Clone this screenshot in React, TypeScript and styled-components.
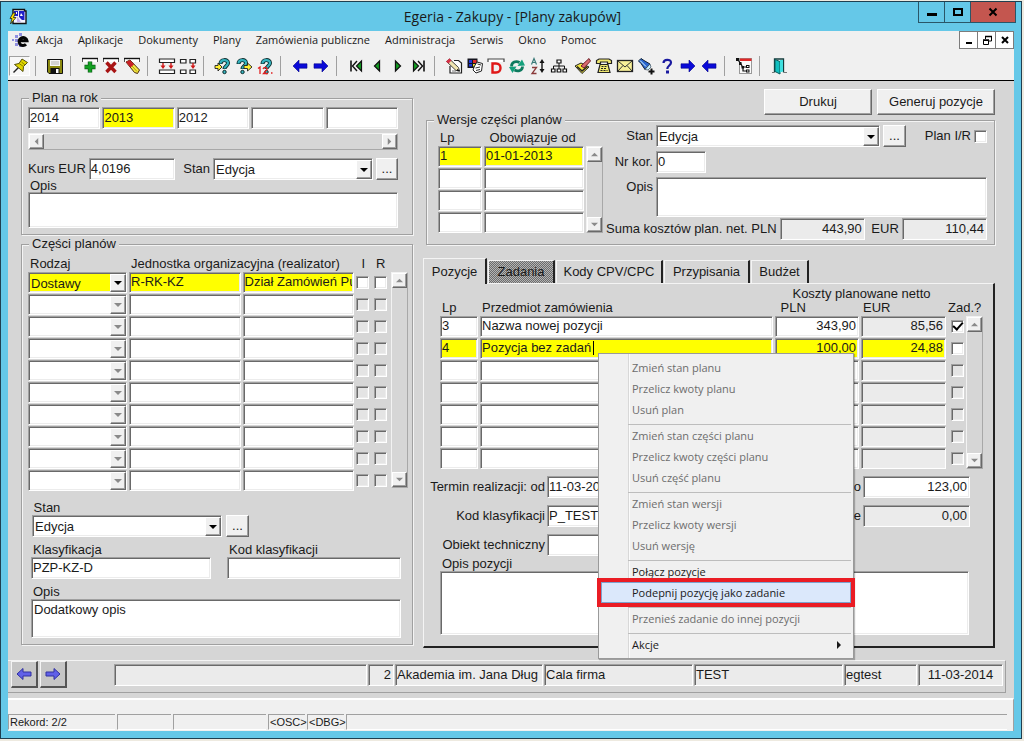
import React from 'react';
import styled, { createGlobalStyle, css } from 'styled-components';

const GlobalStyle = createGlobalStyle`
  * { box-sizing: border-box; }
  body {
    margin: 0;
    background: #eeeae0;
    color: #1a1a1a;
    font-family: "Liberation Sans", Arial, sans-serif;
    font-size: 13px;
    line-height: 14px;
  }
  button, input, select, textarea { font: inherit; color: inherit; margin: 0; border-radius: 0; outline: none; }
`;

const face = '#d6d6d6';
const uiFont = '"Open Sans", "Noto Sans", sans-serif';

const sunken = css`
  border: 1px solid;
  border-color: #a0a0a0 #fff #fff #a0a0a0;
  box-shadow: inset 1px 1px 0 #696969, inset -1px -1px 0 #ececec;
`;
const raised = css`
  border: 1px solid;
  border-color: #fff #696969 #696969 #fff;
  box-shadow: inset -1px -1px 0 #a0a0a0;
`;

/* ---------- window ---------- */

const Desktop = styled.div`
  min-height: 100vh;
  padding: 1px 2px 2px 0;
  display: flex;
`;
const Frame = styled.div`
  flex: 1;
  min-width: 0;
  display: flex;
  flex-direction: column;
  border: 1px solid #1f3f50;
  background: #65c8e8;
  padding-bottom: 7px;
`;
const TitleBar = styled.header`
  display: grid;
  grid-template-columns: 1fr auto 1fr;
  height: 29px;
  padding: 0 5px 0 8px;
  align-items: center;
`;
const Title = styled.h1`
  margin: 0;
  font: 400 14px/20px ${uiFont};
`;
const CaptionButtons = styled.div`
  display: flex;
  justify-self: end;
  align-self: start;
`;
const CaptionButton = styled.button<{ $close?: boolean }>`
  width: ${p => (p.$close ? 46 : 27)}px;
  height: 21px;
  margin-left: -1px;
  padding: 0;
  display: grid;
  place-items: center;
  border: 1px solid #2a5668;
  border-top: 0;
  background: ${p => (p.$close ? '#c4564f' : '#65c8e8')};
`;
const Client = styled.div`
  flex: 1;
  margin: 0 7px;
  display: flex;
  flex-direction: column;
  background: ${face};
`;
const MenuBar = styled.nav`
  display: flex;
  align-items: center;
  height: 20px;
  padding: 0 0 2px 3px;
  background: #f0f0f0;
`;
const MenuList = styled.ul`
  flex: 1;
  display: flex;
  gap: 15px;
  margin: 0 0 0 7px;
  padding: 0;
  list-style: none;
  font: 400 11px/16px ${uiFont};
`;
const MenuLink = styled.a`
  color: inherit;
  text-decoration: none;
  white-space: nowrap;
`;
const ChildButton = styled.button`
  width: 19px;
  height: 18px;
  margin-left: -1px;
  padding: 0;
  display: grid;
  place-items: center;
  background: #fff;
  border: 1px solid #7c7c7c;
`;

/* ---------- toolbar ---------- */

const ToolBar = styled.div`
  display: flex;
  align-items: center;
  height: 30px;
  padding-left: 1px;
  background: #f0f0f0;
  border-bottom: 1px solid #000;
`;
const ToolGroup = styled.div`
  display: flex;
  & + & {
    margin-left: 5px;
    padding-left: 8px;
    border-left: 1px solid #a0a0a0;
  }
`;
const ToolButton = styled.button<{ $pressed?: boolean }>`
  width: 21px;
  height: 20px;
  padding: 0;
  display: grid;
  place-items: center;
  border: 1px solid;
  border-color: ${p => (p.$pressed ? '#a0a0a0 #fff #fff #a0a0a0' : 'transparent')};
  background: ${p => (p.$pressed ? '#f7f7f7' : 'transparent')};
  svg { margin: -1px; }
`;
const ToolSpace = styled.span`
  width: 3px;
`;

/* ---------- form parts ---------- */

const Workspace = styled.main`
  flex: 1;
  display: grid;
  grid-template-columns: minmax(0, 392fr) minmax(0, 572fr);
  gap: 10px;
  align-items: start;
  padding: 8px 19px 0 13px;
`;
const LeftColumn = styled.div`
  display: flex;
  flex-direction: column;
  gap: 4px;
  padding-top: 4px;
`;
const Group = styled.fieldset<{ $pad: string }>`
  min-width: 0;
  margin: 0;
  padding: ${p => p.$pad};
  border: 1px solid #a0a0a0;
  box-shadow: 1px 1px 0 #f4f4f4, inset 1px 1px 0 #f4f4f4;
`;
const Legend = styled.legend`
  margin-left: 1px;
  padding: 0 3px;
  line-height: 10px;
  background: ${face};
`;
const Row = styled.div<{ $top?: number; $gap?: number }>`
  display: flex;
  align-items: center;
  gap: ${p => p.$gap ?? 3}px;
  margin-top: ${p => p.$top ?? 0}px;
`;
const Label = styled.label<{ $width?: number; $top?: number; $block?: boolean }>`
  display: ${p => (p.$block ? 'block' : 'inline-block')};
  flex: none;
  white-space: nowrap;
  text-align: ${p => (p.$width ? 'right' : 'left')};
  ${p => p.$width && `width: ${p.$width}px;`}
  margin-top: ${p => p.$top ?? 0}px;
  ${p => p.$block && 'padding-left: 2px;'}
`;
type FieldProps = { $w?: number; $on?: boolean; $locked?: boolean; $right?: boolean };
const Field = styled.input<FieldProps>`
  ${sunken}
  display: block;
  min-width: 0;
  ${p => (p.$w ? `flex: none; width: ${p.$w}px;` : 'flex: 1; width: 100%;')}
  height: 22px;
  padding: 0 ${p => (p.$right ? 2 : 1)}px 2px 1px;
  background: ${p => (p.$on ? '#ff0' : p.$locked ? '#ebebeb' : '#fff')};
  text-align: ${p => (p.$right ? 'right' : 'left')};
`;
const CellField = styled(Field)`
  height: 21px;
`;
const Area = styled.textarea<{ $h: number; $top?: number }>`
  ${sunken}
  display: block;
  flex: 1;
  width: 100%;
  min-width: 0;
  height: ${p => p.$h}px;
  margin-top: ${p => p.$top ?? 0}px;
  padding: 3px 2px;
  resize: none;
  background: #fff;
`;
const PushButton = styled.button<{ $w: number; $h?: number }>`
  ${raised}
  flex: none;
  width: ${p => p.$w}px;
  height: ${p => p.$h ?? 22}px;
  padding: 0;
  background: #f0f0f0;
`;
const Check = styled.input.attrs({ type: 'checkbox' })<{ $dim?: boolean }>`
  ${sunken}
  appearance: none;
  display: grid;
  place-items: center;
  flex: none;
  width: 13px;
  height: 13px;
  background: ${p => (p.$dim ? '#e4e4e4' : '#fff')};
  &:checked::after {
    content: '';
    width: 8px;
    height: 4px;
    margin-top: -3px;
    border: solid #000;
    border-width: 0 0 2px 2px;
    transform: rotate(-48deg);
  }
`;

const SelectBox = styled.span<{ $w?: number }>`
  position: relative;
  display: block;
  ${p => (p.$w ? `flex: none; width: ${p.$w}px;` : 'flex: 1; min-width: 0;')}
`;
const NativeSelect = styled.select<{ $on?: boolean; $h: number }>`
  ${sunken}
  appearance: none;
  display: block;
  width: 100%;
  height: ${p => p.$h}px;
  padding: 2px 18px 0 2px;
  background: ${p => (p.$on ? '#ff0' : '#fff')};
  opacity: 1;
`;
const SelectArrow = styled.span<{ $dim?: boolean }>`
  ${raised}
  position: absolute;
  top: 2px;
  right: 1px;
  bottom: 1px;
  width: 16px;
  display: grid;
  place-items: center;
  background: #f0f0f0;
  pointer-events: none;
  color: ${p => (p.$dim ? '#8a8a8a' : '#000')};
`;

function Arrow({ dir, size = 8 }: { dir: 'up' | 'down' | 'left' | 'right'; size?: number }) {
  const d = {
    up: 'M0 6L4 2L8 6Z',
    down: 'M0 2L4 6L8 2Z',
    left: 'M6 0L2 4L6 8Z',
    right: 'M2 0L6 4L2 8Z',
  }[dir];
  return (
    <svg width={size} height={size} viewBox="0 0 8 8" aria-hidden="true">
      <path d={d} fill="currentColor" />
    </svg>
  );
}

function Select({ w, on, dim, value, label, id, h = 22 }: {
  w?: number; on?: boolean; dim?: boolean; value?: string; label?: string; id?: string; h?: number;
}) {
  return (
    <SelectBox $w={w}>
      <NativeSelect id={id} aria-label={label} $on={on} $h={h} defaultValue={value ?? ''} disabled={dim}>
        <option>{value ?? ''}</option>
      </NativeSelect>
      <SelectArrow $dim={dim}><Arrow dir="down" /></SelectArrow>
    </SelectBox>
  );
}

const Track = styled.div<{ $horizontal?: boolean; $top?: number; $length?: number }>`
  display: flex;
  flex: none;
  flex-direction: ${p => (p.$horizontal ? 'row' : 'column')};
  justify-content: space-between;
  margin-top: ${p => p.$top ?? 0}px;
  ${p => (p.$horizontal ? 'height: 17px;' : `width: 17px; height: ${p.$length}px;`)}
  border: 1px solid;
  border-color: #f2f2f2 #a8a8a8 #a8a8a8 #f2f2f2;
  background: ${face};
`;
const TrackButton = styled.button`
  ${raised}
  width: 15px;
  height: 15px;
  padding: 0;
  display: grid;
  place-items: center;
  background: #f0f0f0;
  color: #8a8a8a;
`;
function ScrollBar({ horizontal, top, length }: { horizontal?: boolean; top?: number; length?: number }) {
  return (
    <Track $horizontal={horizontal} $top={top} $length={length}>
      <TrackButton aria-label="Wstecz"><Arrow dir={horizontal ? 'left' : 'up'} size={7} /></TrackButton>
      <TrackButton aria-label="Dalej"><Arrow dir={horizontal ? 'right' : 'down'} size={7} /></TrackButton>
    </Track>
  );
}

const Records = styled.table`
  flex: 1;
  min-width: 0;
  width: 100%;
  table-layout: fixed;
  border-collapse: collapse;
  th {
    height: 15px;
    padding: 0 0 1px 2px;
    font-weight: 400;
    text-align: left;
    white-space: nowrap;
    line-height: 14px;
  }
  td { height: 22px; padding: 0 2px 1px 0; position: relative; }
`;
const CenterHead = styled.th`
  && { text-align: center; padding: 0; }
`;
const Grid = styled.div<{ $pad: string }>`
  display: flex;
  align-items: flex-start;
  padding: ${p => p.$pad};
`;
const Caret = styled.span`
  position: absolute;
  left: 113px;
  top: 3px;
  width: 1px;
  height: 14px;
  background: #000;
`;

/* ---------- tabs ---------- */

const Tabs = styled.div`
  display: flex;
  align-items: flex-end;
  gap: 1px;
  height: 25px;
  margin-top: 13px;
`;
const Tab = styled.button<{ $active?: boolean; $focus?: boolean; $w: number }>`
  width: ${p => p.$w}px;
  height: ${p => (p.$active ? 26 : 23)}px;
  margin-bottom: ${p => (p.$active ? -1 : 0)}px;
  padding: 0;
  position: relative;
  z-index: ${p => (p.$active ? 1 : 0)};
  border: solid;
  border-width: 1px 2px 0 1px;
  border-color: #f4f4f4 #222 #f4f4f4 #f4f4f4;
  background: ${p => (p.$focus ? 'repeating-conic-gradient(#6c6c6c 0 25%, #b4b4b4 0 50%) 0 0 / 2px 2px' : face)};
`;
const TabPanel = styled.section`
  position: relative;
  padding: 2px 10px 11px 0;
  border: solid;
  border-width: 1px 2px 2px 1px;
  border-color: #f4f4f4 #222 #222 #f4f4f4;
`;
const DetailGrid = styled.div`
  display: grid;
  grid-template-columns: 121px 84px minmax(0, 1fr) 107px;
  column-gap: 2px;
  row-gap: 7px;
  align-items: center;
  padding: 6px 13px 0 0;
  > label { text-align: right; }
`;
const Versions = styled.div`
  display: grid;
  grid-template-columns: 165px minmax(0, 1fr);
  gap: 3px;
  padding-left: 5px;
`;
const Push = styled.span`
  flex: 1;
`;

/* ---------- context menu ---------- */

const ContextMenu = styled.ul`
  position: absolute;
  left: 174px;
  top: 69px;
  z-index: 2;
  width: 256px;
  margin: 0;
  padding: 3px 2px;
  list-style: none;
  background: linear-gradient(90deg, transparent 29px, #d8d8d8 29px 30px, #fbfbfb 30px 31px, transparent 31px) #f0f0f0;
  border: 1px solid #9a9a9a;
  box-shadow: 1px 1px 1px rgba(0, 0, 0, 0.25);
  font: 400 11px/20px ${uiFont};
`;
const ContextItem = styled.li<{ $divided?: boolean }>`
  ${p => p.$divided && css`
    padding-top: 4px;
    &::before {
      content: '';
      display: block;
      height: 1px;
      margin-left: 27px;
      background: #bdbdbd;
    }
  `}
`;
const ContextButton = styled.button<{ $marked?: boolean }>`
  position: relative;
  display: flex;
  align-items: center;
  justify-content: space-between;
  width: 100%;
  height: 21px;
  padding: 0 8px 0 31px;
  border: 0;
  background: transparent;
  text-align: left;
  &:disabled { color: #6d6d6d; }
  ${p => p.$marked && css`
    z-index: 1;
    background: #dbe8fb;
    border: 1px solid #7da2ce;
    padding-left: 30px;
    outline: 4px solid #ea1c24;
  `}
`;

/* ---------- bottom bars ---------- */

const NavBar = styled.div`
  display: flex;
  align-items: flex-start;
  height: 33px;
  margin: 12px 8px 0 0;
  padding: 0 2px 0 3px;
  border: solid;
  border-width: 1px 1px 1px 0;
  border-color: #f4f4f4 #a0a0a0 #a0a0a0;
`;
const NavButton = styled.button`
  width: 27px;
  height: 27px;
  margin-right: 2px;
  padding: 0;
  display: grid;
  place-items: center;
  background: #c6c6c6;
  border: solid;
  border-width: 1px 2px 2px 1px;
  border-color: #f4f4f4 #555 #555 #f4f4f4;
`;
const NavFields = styled.div`
  flex: 1;
  display: grid;
  grid-template-columns: 253fr 26fr 148fr 149fr 149fr 73fr 85fr;
  gap: 1px;
  margin: 3px 0 0 45px;
`;
const NavField = styled(Field)<{ $center?: boolean }>`
  ${p => p.$center && 'text-align: center;'}
`;
const StatusBar = styled.footer`
  margin-top: 5px;
  padding: 14px 6px 0 0;
  height: 33px;
  background: #f0f0f0;
  border-top: 2px solid #fff;
  border-right: 1px solid #a0a0a0;
  font-size: 11px;
  line-height: 14px;
`;
const StatusCells = styled.div`
  display: grid;
  grid-template-columns: 107px 54px 93px 37px 37px 1fr;
  gap: 2px;
`;
const StatusCell = styled.span`
  height: 16px;
  padding-left: 1px;
  border: solid;
  border-width: 1px 0 1px 1px;
  border-color: #a0a0a0 #fff #fff #a0a0a0;
  white-space: nowrap;
`;

/* ---------- icons ---------- */

const Glyph = ({ children, size = 18 }: { children: React.ReactNode; size?: number }) => (
  <svg width={size} height={size} viewBox="0 0 18 18" fill="none" aria-hidden="true">{children}</svg>
);

const AppIcon = () => (
  <Glyph>
    <path d="M4 1.5H15.5V3H17V15.5H4Z" fill="#f4f4ff" stroke="#111" strokeWidth="1.4" />
    <path d="M5 3H9V8H5ZM10 3H15.5V12H13L10 9Z" fill="#2020c8" />
    <path d="M12 5L14 8H11ZM7 4H8V6H7Z" fill="#fff" />
    <path d="M8 8L12 14H8Z" fill="#c8b0f0" />
    <path d="M4 5L1 10.5H3L1.5 16L7 9.5H4.5L6.5 5Z" fill="#ffe000" stroke="#222" strokeWidth=".8" />
  </Glyph>
);
const EIcon = () => (
  <svg width="18" height="16" viewBox="0 0 18 16" aria-hidden="true">
    <g fill="#8f8fe0">
      <rect x="1" y="7" width="2" height="2" /><rect x="4" y="3" width="3" height="3" />
      <rect x="4" y="7" width="3" height="3" /><rect x="4" y="11" width="3" height="3" />
      <rect x="8" y="1" width="3" height="3" /><rect x="8" y="12" width="3" height="3" />
    </g>
    <path d="M9.5 8.8H16A4 4 0 1 0 15 12.2" fill="none" stroke="#050505" strokeWidth="3" />
  </svg>
);
const topBar = <path d="M1.5 5V1.5H16.5V5" stroke="#555" fill="#fff" strokeWidth="1" />;
const topEdge = <path d="M1 1.5H17" stroke="#111" strokeWidth="1.4" />;
const question = (
  <>
    <path d="M6.5 7C6.5 2 14 2 14 6C14 9 10.5 9 10.5 12" stroke="#0a2a2a" strokeWidth="4" />
    <path d="M6.5 6.5C6.5 2 14 2 14 6C14 9 10.5 9 10.5 11.5" stroke="#35b4c0" strokeWidth="2.2" />
    <circle cx="10.5" cy="15" r="1.7" fill="#35b4c0" stroke="#0a2a2a" />
  </>
);

const icons: Record<string, React.ReactNode> = {
  pin: (
    <>
      <path d="M2.5 15.5L7.5 10.5" stroke="#222" strokeWidth="1.4" />
      <path d="M3.5 7.5L8 6.5L11 2L16.5 5.5L12.5 9.5L12 14.5Z" fill="#e2d800" stroke="#55500a" />
      <path d="M8 6.5L12.5 9.5M10.5 5L14 8" stroke="#8a8200" />
    </>
  ),
  save: (
    <>
      <path d="M1.5 2.5H16.5V16.5H3L1.5 15Z" fill="#8c8a10" stroke="#111" />
      <rect x="4" y="3" width="10" height="6" fill="#f6f6f6" />
      <path d="M5 5H13M5 7H13" stroke="#b0b0b0" />
      <rect x="4.5" y="11" width="9" height="5.5" fill="#111" />
      <rect x="10" y="12" width="2.5" height="4" fill="#fff" />
    </>
  ),
  add: <>{topBar}{topEdge}<path d="M9 4.5V15.5M3.5 10H14.5" stroke="#0a5a14" strokeWidth="4.4" /><path d="M9 5V15M4 10H14" stroke="#12a022" strokeWidth="3" /></>,
  remove: <>{topBar}{topEdge}<path d="M4.5 5.5L13.5 15M13.5 5.5L4.5 15" stroke="#a81414" strokeWidth="3.4" /></>,
  clear: (
    <>
      {topBar}{topEdge}
      <path d="M3 5L7 3L16.5 13L14.5 16.5L11.5 15.5Z" fill="#f4e840" stroke="#4a2a10" />
      <path d="M3 5L7 3L11 7.5L7.5 10.5Z" fill="#c82028" />
      <path d="M9 9L14 14.5" stroke="#a89a10" />
    </>
  ),
  insert: (
    <>
      <path d="M1.5 5.5V2H16.5V5.5ZM1.5 16.5V13H16.5V16.5Z" fill="#fff" stroke="#222" strokeWidth="1.2" />
      <path d="M5 6V9M13 6V9" stroke="#d01818" strokeWidth="1.4" />
      <path d="M2.5 8.5H7.5L5 12ZM10.5 8.5H15.5L13 12Z" fill="#d01818" />
    </>
  ),
  copy: (
    <>
      <path d="M1.5 2.5H7V6H1.5ZM11 2.5H16.5V6H11ZM1.5 13H7V16.5H1.5ZM11 13H16.5V16.5H11Z" fill="#fff" stroke="#222" strokeWidth="1.2" />
      <path d="M14 6V9" stroke="#d01818" strokeWidth="1.4" /><path d="M11.5 8.5H16.5L14 12Z" fill="#d01818" />
    </>
  ),
  askIn: <>{question}<path d="M1 8.5H4V6L8 10L4 14V11.5H1Z" fill="#fff030" stroke="#222" strokeWidth=".9" /></>,
  askOut: <><g transform="translate(-3 0)">{question}</g><path d="M9 8.5H12.5V6L17 10L12.5 14V11.5H9Z" fill="#fff030" stroke="#222" strokeWidth=".9" /></>,
  askCount: <>{question}<path d="M2 11.5L4 10V17M7 12C8 9.5 11.5 10 11 12.5L7.5 16.5H12M15 16H16.5" stroke="#e02020" strokeWidth="1.3" /></>,
  left: <path d="M2 9L8 3V6.8H16V11.2H8V15Z" fill="#0a0ad8" stroke="#05058a" strokeWidth=".6" />,
  right: <path d="M16 9L10 3V6.8H2V11.2H10V15Z" fill="#0a0ad8" stroke="#05058a" strokeWidth=".6" />,
  first: <><path d="M4 3.5V14.5" stroke="#111" strokeWidth="1.6" /><path d="M10 4L5.5 9L10 14" stroke="#111" strokeWidth="1.4" /><path d="M14.5 4V14L9.5 9Z" fill="#12a022" stroke="#111" strokeWidth="1.2" /></>,
  prev: <path d="M11.5 4V14L6.5 9Z" fill="#12a022" stroke="#111" strokeWidth="1.3" />,
  next: <path d="M6.5 4V14L11.5 9Z" fill="#12a022" stroke="#111" strokeWidth="1.3" />,
  last: <><path d="M14 3.5V14.5" stroke="#111" strokeWidth="1.6" /><path d="M8 4L12.5 9L8 14" stroke="#111" strokeWidth="1.4" /><path d="M3.5 4V14L8.5 9Z" fill="#12a022" stroke="#111" strokeWidth="1.2" /></>,
  edit: (
    <>
      <path d="M5 9V16H16.5V6L13.5 3.5H9" fill="#fff" stroke="#222" strokeWidth="1.2" />
      <path d="M7 14H11" stroke="#777" />
      <path d="M1.5 4.5L4.5 2L13.5 10.5L14.5 14L11 13.5Z" fill="#f2e6b0" stroke="#333" strokeWidth=".9" />
      <path d="M1 4.5L4.5 1.5L6.5 3.5L3.5 6.5Z" fill="#d83048" />
      <path d="M12.5 12.5L14.5 14L12 13.5Z" fill="#111" stroke="#111" />
    </>
  ),
  palette: (
    <>
      <rect x="1.5" y="1.5" width="10" height="9.5" fill="#14141e" />
      <path d="M3 3H6V6H3Z" fill="#2038d8" /><path d="M7 3H10.5V6H7Z" fill="#e02828" /><path d="M3 7H6V9.5H3Z" fill="#2038d8" /><path d="M7 7H10V9.5H7Z" fill="#e8e040" />
      <path d="M11 5L16.5 6.5L15.5 14L10 16L7 13L8.5 9Z" fill="#fff" stroke="#222" />
      <path d="M9.5 11L14 10M10 13.5L14 12.5M11.5 7L15 8" stroke="#333" />
    </>
  ),
  dictionary: <><path d="M1 5V2H17V5" fill="#fff" stroke="#444" strokeWidth="1.2" /><path d="M5.5 6.5H9C15 6.5 15 15.5 9 15.5H5.5Z" stroke="#e01818" strokeWidth="2.4" /></>,
  refresh: (
    <>
      <path d="M3.5 9.5C3.5 5 8 3.5 11.5 5.5" stroke="#0d7a5e" strokeWidth="2.8" /><path d="M9.5 9L17 8.5L14 2.5Z" fill="#14a07c" />
      <path d="M14.5 9.5C14.5 13.5 10 15 6.5 13" stroke="#0d7a5e" strokeWidth="2.8" /><path d="M8.5 9.5L1 10L4.5 16Z" fill="#14a07c" />
    </>
  ),
  sort: (
    <>
      <path d="M2.5 7.5L5 1.5L7.5 7.5M3.3 5.5H6.7" stroke="#3a7a78" strokeWidth="1.2" />
      <path d="M3 10.5H7.5L3 16.5H7.5" stroke="#8a3a3a" strokeWidth="1.3" />
      <path d="M13 4V14" stroke="#111" strokeWidth="1.4" /><path d="M10.5 6L13 2L15.5 6ZM10.5 12L13 16L15.5 12Z" fill="#111" />
    </>
  ),
  tree: (
    <>
      <path d="M9 6V9M3.5 12V9H14.5V12M9 9V12" stroke="#111" />
      <path d="M7 3H11V6H7ZM1.5 12H5V15H1.5ZM7.2 12H10.8V15H7.2ZM13 12H16.5V15H13Z" fill="#fff" stroke="#111" strokeWidth="1.2" />
    </>
  ),
  stamp: (
    <>
      <path d="M1 9L7 6L15 10L8 16.5Z" fill="#f4e640" stroke="#222" />
      <path d="M3 9.5L8 14L13.5 9.5" stroke="#222" strokeWidth="1.6" />
      <path d="M7 9L15 1.5L16.5 4L10 11Z" fill="#d86a70" stroke="#702028" />
    </>
  ),
  phone: (
    <>
      <path d="M1.5 6.5V3.5L4 2H14L16.5 3.5V6.5H12.5V5H5.5V6.5Z" fill="#f0e870" stroke="#222" strokeWidth="1.2" />
      <path d="M5 7.5H13L15 15.5H3Z" fill="#f0e870" stroke="#222" strokeWidth="1.2" />
      <path d="M6.5 9.5H11.5M6 11.5H12M5.5 13.5H12.5" stroke="#222" strokeDasharray="2 1" />
    </>
  ),
  mail: (
    <>
      <rect x="1.5" y="3.5" width="15" height="11" fill="#f8f098" stroke="#222" strokeWidth="1.3" />
      <path d="M2 4L9 10L16 4M2 14L7 8.5M16 14L11 8.5" stroke="#333" />
    </>
  ),
  torch: (
    <>
      <path d="M1.5 4L4 1.5L7 3.5L13 7L8 12.5L4 6.5Z" fill="#2a66d0" stroke="#123" />
      <path d="M13 7L8 12.5L11 13L14 10Z" fill="#c8f0ff" stroke="#345" strokeWidth=".7" />
      <path d="M3 3.5L9 9.5" stroke="#dff" />
      <path d="M14.5 11.5V17.5M11.5 14.5H17.5" stroke="#111" strokeWidth="2" />
    </>
  ),
  help: <><path d="M5.5 6C5.5 1.8 13 1.8 13 5.5C13 8.5 9.3 8.5 9.3 12" stroke="#1a1aa0" strokeWidth="2.2" /><rect x="8" y="13.5" width="3" height="3" fill="#1a1aa0" /></>,
  outline: (
    <>
      <rect x="4.5" y="1.5" width="12" height="15" fill="#fafafa" stroke="#999" />
      <rect x="5" y="1.5" width="11.5" height="2.5" fill="#e02828" />
      <path d="M3 3L6 7L8 11V14H12M8 10H12" stroke="#111" strokeWidth="1.2" />
      <path d="M1 1H4V4H1ZM4 5H6.5V8H4ZM6.5 9H9V11.5H6.5ZM11 8H14.5V11H11ZM11 12.5H14.5V15.5H11Z" fill="#111" />
      <path d="M12 9H13.5V10H12ZM12 13.5H13.5V14.5H12Z" fill="#fff" />
    </>
  ),
  exit: (
    <>
      <path d="M4.5 15.5V2H13.5V15.5" fill="#fff" stroke="#123c3c" strokeWidth="1.3" />
      <path d="M5 2.5L10 4.5V17L5 14.5Z" fill="#10c0c0" stroke="#0a5a5a" />
      <path d="M10 3H13V14.5L10 15.5Z" fill="#40e0e0" />
      <path d="M2 15.5H4M14 15.5H17" stroke="#777" />
    </>
  ),
};

const toolGroups: [string, string][][] = [
  [['pin', 'Przypnij']],
  [['save', 'Zapisz']],
  [['add', 'Dodaj'], ['remove', 'Usuń'], ['clear', 'Wyczyść']],
  [['insert', 'Wstaw'], ['copy', 'Kopiuj']],
  [['askIn', 'Wprowadź zapytanie'], ['askOut', 'Wykonaj zapytanie'], ['askCount', 'Policz rekordy']],
  [['left', 'Poprzedni blok'], ['right', 'Następny blok']],
  [['first', 'Pierwszy'], ['prev', 'Poprzedni'], ['next', 'Następny'], ['last', 'Ostatni']],
  [['edit', 'Edytuj'], ['palette', 'Kolory'], ['dictionary', 'Słownik'], ['refresh', 'Odśwież'], ['sort', 'Sortuj'], ['tree', 'Struktura'],
    ['', ''], ['stamp', 'Zatwierdź'], ['phone', 'Telefon'], ['mail', 'Poczta'], ['torch', 'Szukaj'], ['help', 'Pomoc'], ['right', 'Dalej'], ['left', 'Wstecz']],
  [['outline', 'Nawigator']],
  [['exit', 'Wyjście']],
];

/* ---------- data ---------- */

const menus = ['Akcja', 'Aplikacje', 'Dokumenty', 'Plany', 'Zamówienia publiczne', 'Administracja', 'Serwis', 'Okno', 'Pomoc'];
const years = ['2014', '2013', '2012', '', ''];
const parts = [{ kind: 'Dostawy', unit: 'R-RK-KZ', name: 'Dział Zamówień Publicznych' }, ...Array(9).fill(null)];
const versions = [{ lp: '1', from: '01-01-2013' }, null, null, null];
const positions = [
  { lp: '3', name: 'Nazwa nowej pozycji', pln: '343,90', eur: '85,56', task: true },
  { lp: '4', name: 'Pozycja bez zadań', pln: '100,00', eur: '24,88', task: false, current: true },
  ...Array(5).fill(null),
];
const contextItems: { text: string; enabled?: boolean; divided?: boolean; marked?: boolean; sub?: boolean }[] = [
  { text: 'Zmień stan planu' },
  { text: 'Przelicz kwoty planu' },
  { text: 'Usuń plan' },
  { text: 'Zmień stan części planu', divided: true },
  { text: 'Przelicz kwoty części planu' },
  { text: 'Usuń część planu' },
  { text: 'Zmień stan wersji', divided: true },
  { text: 'Przelicz kwoty wersji' },
  { text: 'Usuń wersję' },
  { text: 'Połącz pozycje', divided: true, enabled: true },
  { text: 'Podepnij pozycję jako zadanie', enabled: true, marked: true },
  { text: 'Przenieś zadanie do innej pozycji', divided: true },
  { text: 'Akcje', divided: true, enabled: true, sub: true },
];

/* ---------- sections ---------- */

function PlanYear() {
  return (
    <Group $pad="4px 14px 6px 6px">
      <Legend>Plan na rok</Legend>
      <Row $gap={2}>
        {years.map((y, i) => <Field key={i} aria-label={`Rok ${i + 1}`} defaultValue={y} $on={y === '2013'} />)}
      </Row>
      <ScrollBar horizontal top={4} />
      <Row $top={8}>
        <Label htmlFor="rate">Kurs EUR</Label>
        <Field id="rate" $w={86} defaultValue="4,0196" />
        <Push />
        <Label htmlFor="planState">Stan</Label>
        <Select id="planState" w={160} value="Edycja" />
        <PushButton $w={22} aria-label="Wybierz stan planu">...</PushButton>
      </Row>
      <TightLabel htmlFor="planDesc" $block>Opis</TightLabel>
      <Area id="planDesc" $h={36} />
    </Group>
  );
}
const TightLabel = styled(Label)`
  line-height: 12px;
`;

function PlanParts() {
  return (
    <Group $pad="8px 4px 6px 6px">
      <Legend>Części planów</Legend>
      <Grid $pad="0">
        <Records>
          <colgroup><col style={{ width: 101 }} /><col /><col /><col style={{ width: 18 }} /><col style={{ width: 17 }} /></colgroup>
          <thead>
            <tr><th>Rodzaj</th><th colSpan={2}>Jednostka organizacyjna (realizator)</th><th>&nbsp;I</th><th>R</th></tr>
          </thead>
          <tbody>
            {parts.map((p, i) => (
              <tr key={i}>
                <td><Select h={21} label={`Rodzaj ${i + 1}`} on={!!p} dim={!p} value={p?.kind} /></td>
                <td><CellField aria-label={`Jednostka ${i + 1}`} $on={!!p} defaultValue={p?.unit} /></td>
                <td><CellField aria-label={`Nazwa jednostki ${i + 1}`} $on={!!p} defaultValue={p?.name} /></td>
                <td><Check aria-label={`I ${i + 1}`} $dim={!p} /></td>
                <td><Check aria-label={`R ${i + 1}`} $dim={!p} /></td>
              </tr>
            ))}
          </tbody>
        </Records>
        <ScrollBar top={15} length={216} />
      </Grid>
      <Label htmlFor="partState" $block $top={9}>&nbsp;Stan</Label>
      <Grid $pad="0 0 0 4px">
        <Row $gap={4}>
          <Select id="partState" w={190} value="Edycja" />
          <PushButton $w={23} aria-label="Wybierz stan części">...</PushButton>
        </Row>
      </Grid>
      <ClassGrid>
        <div>
          <Label htmlFor="cls" $block>Klasyfikacja</Label>
          <Field id="cls" defaultValue="PZP-KZ-D" />
        </div>
        <div>
          <Label htmlFor="clsCode" $block>Kod klasyfikacji</Label>
          <Field id="clsCode" />
        </div>
        <Wide>
          <Label htmlFor="partDesc" $block>Opis</Label>
          <Area id="partDesc" $h={39} defaultValue="Dodatkowy opis" />
        </Wide>
      </ClassGrid>
    </Group>
  );
}
const ClassGrid = styled.div`
  display: grid;
  grid-template-columns: minmax(0, 180fr) minmax(0, 174fr);
  column-gap: 16px;
  row-gap: 6px;
  padding: 6px 7px 0 3px;
`;
const Wide = styled.div`
  grid-column: 1 / -1;
`;
const Actions = styled.div`
  display: flex;
  justify-content: flex-end;
  gap: 5px;
`;
const VersionsWrap = styled.div`
  padding-left: 3px;
`;

function VersionsGroup() {
  return (
    <VersionsWrap>
      <Group $pad="0 7px 4px 6px">
        <Legend>Wersje części planów</Legend>
        <Versions>
          <Grid $pad="6px 0 0 0">
            <Records>
              <colgroup><col style={{ width: 46 }} /><col /></colgroup>
              <thead><tr><th>Lp</th><th>&nbsp;Obowiązuje od</th></tr></thead>
              <tbody>
                {versions.map((v, i) => (
                  <tr key={i}>
                    <td><CellField aria-label={`Lp wersji ${i + 1}`} $on={!!v} defaultValue={v?.lp} /></td>
                    <td><CellField aria-label={`Obowiązuje od ${i + 1}`} $on={!!v} defaultValue={v?.from} /></td>
                  </tr>
                ))}
              </tbody>
            </Records>
            <ScrollBar top={15} length={87} />
          </Grid>
          <div>
            <Row>
              <Label htmlFor="verState" $width={47}>Stan</Label>
              <Select id="verState" w={224} value="Edycja" />
              <PushButton $w={23} aria-label="Wybierz stan wersji">...</PushButton>
              <Push />
              <Label htmlFor="planIR">Plan I/R</Label>
              <Check id="planIR" />
            </Row>
            <Row $top={4}>
              <Label htmlFor="corr" $width={47}>Nr kor.</Label>
              <Field id="corr" $w={50} defaultValue="0" />
            </Row>
            <TopRow $top={4}>
              <Label htmlFor="verDesc" $width={47} $top={3}>Opis</Label>
              <Area id="verDesc" $h={40} />
            </TopRow>
            <Row $top={1}>
              <Label htmlFor="sumPln">Suma kosztów plan. net. PLN</Label>
              <Field id="sumPln" $locked $right defaultValue="443,90" readOnly />
              <Label htmlFor="sumEur">&nbsp;EUR</Label>
              <Field id="sumEur" $locked $right defaultValue="110,44" readOnly />
            </Row>
          </div>
        </Versions>
      </Group>
    </VersionsWrap>
  );
}
const TopRow = styled(Row)`
  align-items: flex-start;
`;

function Positions() {
  return (
    <>
      <Tabs role="tablist">
        <Tab role="tab" $active $w={64}>Pozycje</Tab>
        <Tab role="tab" $focus $w={67}>Zadania</Tab>
        <Tab role="tab" $w={107}>Kody CPV/CPC</Tab>
        <Tab role="tab" $w={86}>Przypisania</Tab>
        <Tab role="tab" $w={58}>Budżet</Tab>
      </Tabs>
      <TabPanel>
        <Grid $pad="0 0 0 16px">
          <Records>
            <colgroup>
              <col style={{ width: 40 }} /><col /><col style={{ width: 86 }} /><col style={{ width: 87 }} /><col style={{ width: 18 }} />
            </colgroup>
            <thead>
              <tr><th colSpan={2} /><CenterHead colSpan={2}>Koszty planowane netto</CenterHead><th /></tr>
              <tr><th>Lp</th><th>Przedmiot zamówienia</th><th>&nbsp;PLN</th><th>EUR</th><ZadHead>Zad.?</ZadHead></tr>
            </thead>
            <tbody>
              {positions.map((p, i) => (
                <tr key={i}>
                  <td><CellField aria-label={`Lp ${i + 1}`} $on={p?.current} defaultValue={p?.lp} /></td>
                  <td>
                    <CellField aria-label={`Przedmiot ${i + 1}`} $on={p?.current} defaultValue={p?.name} />
                    {p?.current && <Caret />}
                  </td>
                  <td><CellField aria-label={`PLN ${i + 1}`} $right $on={p?.current} defaultValue={p?.pln} /></td>
                  <td><CellField aria-label={`EUR ${i + 1}`} $right $locked $on={p?.current} defaultValue={p?.eur} readOnly /></td>
                  <td><CheckCell><Check aria-label={`Zadanie ${i + 1}`} $dim={!p} defaultChecked={p?.task} /></CheckCell></td>
                </tr>
              ))}
            </tbody>
          </Records>
          <ScrollBar top={30} length={153} />
        </Grid>
        <DetailGrid>
          <Label htmlFor="term">Termin realizacji: od</Label>
          <Field id="term" defaultValue="11-03-2014" />
          <Label htmlFor="net">o</Label>
          <Field id="net" $right defaultValue="123,00" />
          <Label htmlFor="code">Kod klasyfikacji</Label>
          <Field id="code" defaultValue="P_TEST" />
          <Label htmlFor="rest">e</Label>
          <Field id="rest" $right $locked defaultValue="0,00" readOnly />
          <Label htmlFor="object">Obiekt techniczny</Label>
          <Field id="object" />
        </DetailGrid>
        <DescBlock>
          <Label htmlFor="posDesc" $block>Opis pozycji</Label>
          <Area id="posDesc" $h={64} />
        </DescBlock>
        <ContextMenu role="menu">
          {contextItems.map(item => (
            <ContextItem key={item.text} $divided={item.divided} role="none">
              <ContextButton role="menuitem" disabled={!item.enabled} $marked={item.marked}>
                {item.text}
                {item.sub && <Arrow dir="right" />}
              </ContextButton>
            </ContextItem>
          ))}
        </ContextMenu>
      </TabPanel>
    </>
  );
}
const ZadHead = styled.th`
  && { padding-left: 0; }
`;
const CheckCell = styled.div`
  padding-left: 3px;
`;
const DescBlock = styled.div`
  padding: 1px 14px 0 16px;
`;

export default function App() {
  return (
    <>
      <GlobalStyle />
      <Desktop>
        <Frame>
          <TitleBar>
            <AppIcon />
            <Title>Egeria - Zakupy - [Plany zakupów]</Title>
            <CaptionButtons>
              <CaptionButton aria-label="Minimalizuj">
                <svg width="12" height="10" viewBox="0 0 12 10"><path d="M1 7.5H11" stroke="#000" strokeWidth="3" /></svg>
              </CaptionButton>
              <CaptionButton aria-label="Maksymalizuj">
                <svg width="12" height="10" viewBox="0 0 12 10"><rect x="2" y="2" width="8" height="6" fill="none" stroke="#000" strokeWidth="2" /></svg>
              </CaptionButton>
              <CaptionButton $close aria-label="Zamknij">
                <svg width="10" height="10" viewBox="0 0 10 10"><path d="M1.5 1.5L8.5 8.5M8.5 1.5L1.5 8.5" stroke="#000" strokeWidth="2" /></svg>
              </CaptionButton>
            </CaptionButtons>
          </TitleBar>
          <Client>
            <MenuBar>
              <EIcon />
              <MenuList>
                {menus.map(m => <li key={m}><MenuLink href="#">{m}</MenuLink></li>)}
              </MenuList>
              <ChildButton aria-label="Minimalizuj okno">
                <svg width="10" height="10" viewBox="0 0 10 10"><path d="M2 8H8" stroke="#000" strokeWidth="2" /></svg>
              </ChildButton>
              <ChildButton aria-label="Przywróć okno">
                <svg width="10" height="10" viewBox="0 0 10 10" fill="none" stroke="#000">
                  <path d="M3.5 4V1.5H9.5V6H7" /><path d="M1.5 5.5H6.5V9.5H1.5Z" /><path d="M3 1.5H10M1 5H7" strokeWidth="1.6" />
                </svg>
              </ChildButton>
              <ChildButton aria-label="Zamknij okno">
                <svg width="10" height="10" viewBox="0 0 10 10"><path d="M2 2L8 8M8 2L2 8" stroke="#000" strokeWidth="2" /></svg>
              </ChildButton>
            </MenuBar>
            <ToolBar role="toolbar">
              {toolGroups.map((group, g) => (
                <ToolGroup key={g}>
                  {group.map(([name, label], i) =>
                    name
                      ? <ToolButton key={i} aria-label={label} $pressed={name === 'pin'}><Glyph>{icons[name]}</Glyph></ToolButton>
                      : <ToolSpace key={i} />)}
                </ToolGroup>
              ))}
            </ToolBar>
            <Workspace>
              <LeftColumn>
                <PlanYear />
                <PlanParts />
              </LeftColumn>
              <div>
                <Actions>
                  <PushButton $w={108} $h={26}>Drukuj</PushButton>
                  <PushButton $w={118} $h={26}>Generuj pozycje</PushButton>
                </Actions>
                <VersionsGroup />
                <Positions />
              </div>
            </Workspace>
            <NavBar>
              <NavButton aria-label="Poprzedni rekord">
                <Glyph><path d="M2 9L8 3.5V7H16V11H8V14.5Z" fill="#6060e8" stroke="#3030a0" /></Glyph>
              </NavButton>
              <NavButton aria-label="Następny rekord">
                <Glyph><path d="M16 9L10 3.5V7H2V11H10V14.5Z" fill="#6060e8" stroke="#3030a0" /></Glyph>
              </NavButton>
              <NavFields>
                <NavField aria-label="Komunikat" $locked readOnly />
                <NavField aria-label="Numer" $locked $right readOnly value="2" />
                <NavField aria-label="Instytucja" $locked readOnly value="Akademia im. Jana Dług" />
                <NavField aria-label="Zakres" $locked readOnly value="Cala firma" />
                <NavField aria-label="Baza" $locked readOnly value="TEST" />
                <NavField aria-label="Użytkownik" $locked readOnly value="egtest" />
                <NavField aria-label="Data" $locked $center readOnly value="11-03-2014" />
              </NavFields>
            </NavBar>
            <StatusBar>
              <StatusCells>
                <StatusCell>Rekord: 2/2</StatusCell>
                <StatusCell />
                <StatusCell />
                <StatusCell>&lt;OSC&gt;</StatusCell>
                <StatusCell>&lt;DBG&gt;</StatusCell>
                <StatusCell />
              </StatusCells>
            </StatusBar>
          </Client>
        </Frame>
      </Desktop>
    </>
  );
}
